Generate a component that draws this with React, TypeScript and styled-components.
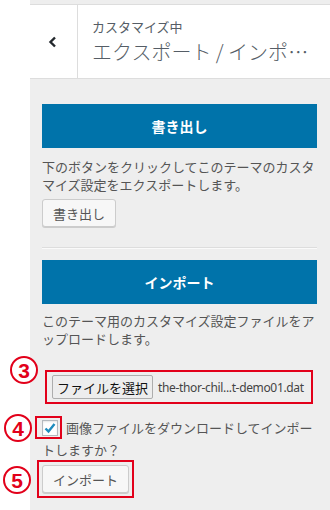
import React from "react";
import styled, { createGlobalStyle } from "styled-components";

const Global = createGlobalStyle`
  html, body { margin: 0; padding: 0; background: #fff; }
  body { font-family: "Noto Sans CJK JP", "Noto Sans", sans-serif; }
  * { box-sizing: border-box; }
`;

const Panel = styled.div`
  margin-left: 30px;
  width: 300px;
  min-height: 510px;
  background: #eee;
  padding-top: 4px;
  display: flex;
  flex-direction: column;
`;

const Header = styled.div`
  display: flex;
  height: 75px;
  background: #fff;
  border-top: 1px solid #ddd;
  border-bottom: 1px solid #ddd;
`;

const BackButton = styled.div`
  width: 48px;
  flex: none;
  display: flex;
  align-items: center;
  justify-content: center;
  border-right: 1px solid #ddd;
  padding-right: 2px;
`;

const TitleBox = styled.div`
  flex: 1;
  min-width: 0;
  padding: 13px 8px 0 14px;
  color: #555d66;
  display: flex;
  flex-direction: column;
  gap: 1px;
`;

const SubTitle = styled.div`
  font-size: 13px;
  line-height: 18px;
`;

const Title = styled.div`
  font-size: 20px;
  line-height: 30px;
  font-weight: 300;
  white-space: nowrap;
  overflow: hidden;
  text-overflow: ellipsis;
`;

const Content = styled.div`
  padding: 25px 13px 0 12px;
  display: flex;
  flex-direction: column;
  align-items: stretch;
`;

const Section = styled.div`
  display: flex;
  flex-direction: column;
  align-items: flex-start;
`;

const SectionHead = styled.div`
  align-self: stretch;
  height: 44px;
  background: #0073aa;
  color: #fff;
  font-size: 14px;
  font-weight: 700;
  display: flex;
  align-items: center;
  justify-content: center;
`;

const Description = styled.p<{ $gap: number }>`
  margin: ${(p) => p.$gap}px 0 0;
  font-size: 13px;
  line-height: 18px;
  color: #555;
`;

const Button = styled.button<{ $gap: number }>`
  display: inline-flex;
  align-items: center;
  height: 28px;
  margin-top: ${(p) => p.$gap}px;
  padding: 0 10px;
  font-family: inherit;
  font-size: 13px;
  color: #555;
  background: #f7f7f7;
  border: 1px solid #ccc;
  border-radius: 3px;
  box-shadow: 0 1px 0 #ccc;
  position: relative;
  white-space: nowrap;
`;

const Separator = styled.hr`
  align-self: stretch;
  margin: 20px 0 11px;
  border: 0;
  border-top: 1px solid #ddd;
  border-bottom: 1px solid #fafafa;
`;

const FileRow = styled.div`
  position: relative;
  align-self: stretch;
  display: flex;
  align-items: center;
  gap: 5px;
  margin: 27px 0 0 10px;
  height: 24px;
`;

const FileButton = styled.span`
  flex: none;
  display: inline-flex;
  align-items: center;
  height: 24px;
  padding: 0 4px;
  font-size: 13px;
  color: #111;
  white-space: nowrap;
  background: #ededed;
  border: 1px solid #adadad;
  border-radius: 2px;
`;

const FileName = styled.span`
  font-family: "Noto Sans", "Noto Sans CJK JP", sans-serif;
  font-size: 12px;
  letter-spacing: -0.35px;
  color: #444;
  white-space: nowrap;
`;

const CheckLabel = styled.div`
  margin-top: 18px;
  padding-right: 3px;
  font-size: 13px;
  line-height: 22px;
  color: #555;
`;

const CheckBox = styled.span`
  position: relative;
  display: inline-block;
  width: 16px;
  height: 16px;
  margin-right: 8px;
  vertical-align: -3px;
  background: #fff;
  border: 1px solid #b4b9be;
  box-shadow: inset 0 1px 2px rgba(0, 0, 0, 0.1);
`;

const Highlight = styled.span<{ $t: number; $r: number; $b: number; $l: number }>`
  position: absolute;
  top: ${(p) => p.$t}px;
  right: ${(p) => p.$r}px;
  bottom: ${(p) => p.$b}px;
  left: ${(p) => p.$l}px;
  border: 2px solid #e2001a;
  pointer-events: none;
`;

const Marker = styled.span<{ $x: number; $y: number }>`
  position: absolute;
  left: ${(p) => p.$x}px;
  top: ${(p) => p.$y}px;
  width: 28px;
  height: 28px;
  border-radius: 50%;
  border: 2.5px solid #e2001a;
  background: #fff;
  color: #e2001a;
  font-family: "Liberation Sans", Arial, sans-serif;
  font-weight: 700;
  font-size: 21px;
  line-height: 1;
  display: flex;
  align-items: center;
  justify-content: center;
`;

const Chevron = () => (
  <svg width="10" height="12" viewBox="0 0 10 12">
    <path d="M7 1.5 L2.5 6 L7 10.5" fill="none" stroke="#23282d" strokeWidth="2.4" />
  </svg>
);

const Check = () => (
  <svg width="14" height="14" viewBox="0 0 14 14" style={{ display: "block" }}>
    <path d="M2.5 7.5 L5.5 10.5 L11.5 3" fill="none" stroke="#1e8cbe" strokeWidth="2.4" />
  </svg>
);

export default function App() {
  return (
    <>
      <Global />
      <Panel>
        <Header>
          <BackButton>
            <Chevron />
          </BackButton>
          <TitleBox>
            <SubTitle>カスタマイズ中</SubTitle>
            <Title>エクスポート / インポート</Title>
          </TitleBox>
        </Header>
        <Content>
          <Section>
            <SectionHead>書き出し</SectionHead>
            <Description $gap={10}>
              下のボタンをクリックしてこのテーマのカスタマイズ設定をエクスポートします。
            </Description>
            <Button $gap={5}>書き出し</Button>
          </Section>
          <Separator />
          <Section>
            <SectionHead>インポート</SectionHead>
            <Description $gap={8}>
              このテーマ用のカスタマイズ設定ファイルをアップロードします。
            </Description>
            <FileRow>
              <FileButton>ファイルを選択</FileButton>
              <FileName>the-thor-chil...t-demo01.dat</FileName>
              <Highlight $t={-5} $r={4} $b={-5} $l={-7} />
              <Marker $x={-42} $y={-19}>3</Marker>
            </FileRow>
            <CheckLabel>
              <CheckBox>
                <Check />
                <Highlight $t={-5} $r={-5} $b={-4} $l={-8} />
                <Marker $x={-39} $y={-7}>4</Marker>
              </CheckBox>
              画像ファイルをダウンロードしてインポートしますか？
            </CheckLabel>
            <Button $gap={4}>
              インポート
              <Highlight $t={-6} $r={-6} $b={-6} $l={-6} />
              <Marker $x={-40} $y={0}>5</Marker>
            </Button>
          </Section>
        </Content>
      </Panel>
    </>
  );
}
